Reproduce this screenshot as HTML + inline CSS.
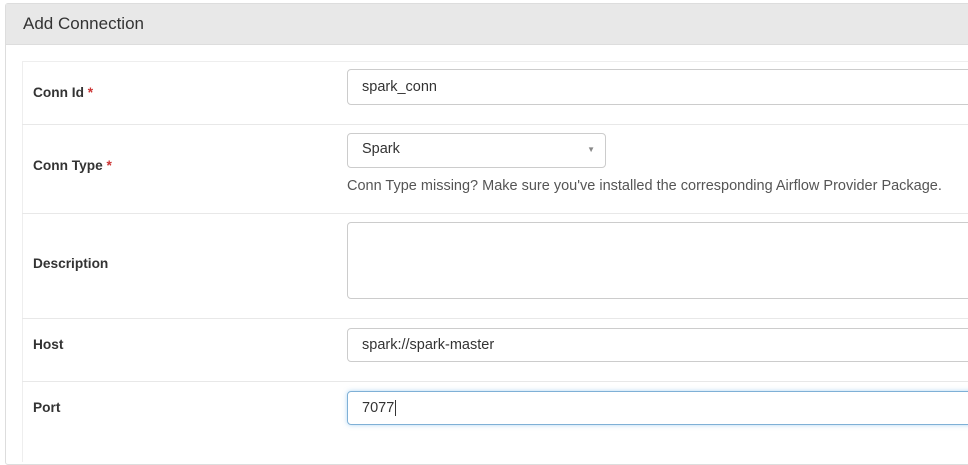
<!DOCTYPE html>
<html><head><style>
html,body{margin:0;width:968px;height:441px;overflow:hidden;background:#fff;font-family:"Liberation Sans",Arial,sans-serif;color:#333;}
.panel{position:absolute;left:5px;top:3px;width:990px;height:460px;border:1px solid #ddd;border-radius:3px;}
.hdr{position:absolute;left:0;top:0;right:0;height:40px;background:#e8e8e8;border-bottom:1px solid #ddd;font-size:17px;line-height:40px;padding-left:17px;color:#333;}
.tbl{position:absolute;left:22px;top:61px;width:980px;height:400px;border-left:1px solid #eee;border-top:1px solid #eee;}
.row{position:absolute;left:22px;width:980px;border-top:1px solid #e8e8e8;}
.lbl{position:absolute;left:33px;font-size:13.7px;font-weight:bold;color:#333;}
.req{color:#c33;}
.inp{position:absolute;left:347px;width:640px;height:34px;border:1px solid #ccc;border-radius:4px;box-sizing:border-box;font-size:14.5px;line-height:32px;padding-left:14px;color:#333;}
</style></head><body>
<div class="panel"><div class="hdr">Add Connection</div></div>
<div class="tbl"></div>
<div class="row" style="top:124px"></div>
<div class="row" style="top:213px"></div>
<div class="row" style="top:318px"></div>
<div class="row" style="top:381px"></div>
<div class="lbl" style="top:85px">Conn Id <span class="req">*</span></div>
<div class="lbl" style="top:158px">Conn Type <span class="req">*</span></div>
<div class="lbl" style="top:256px">Description</div>
<div class="lbl" style="top:337px">Host</div>
<div class="lbl" style="top:400px">Port</div>
<div class="inp" style="top:69px;height:36px;line-height:34px">spark_conn</div>
<div class="inp" style="top:133px;width:259px;height:35px;line-height:30px">Spark<span style="position:absolute;right:10px;top:1px;font-size:8px;color:#888">▼</span></div>
<div style="position:absolute;left:347px;top:178px;font-size:14.5px;color:#555">Conn Type missing? Make sure you've installed the corresponding Airflow Provider Package.</div>
<div class="inp" style="top:222px;height:77px"></div>
<div class="inp" style="top:328px">spark://spark-master</div>
<div class="inp" style="top:391px;border-color:#7fb0d6;box-shadow:0 0 5px rgba(102,175,233,.5)">7077<span style="border-left:1px solid #333;margin-left:1px"></span></div>
</body></html>
